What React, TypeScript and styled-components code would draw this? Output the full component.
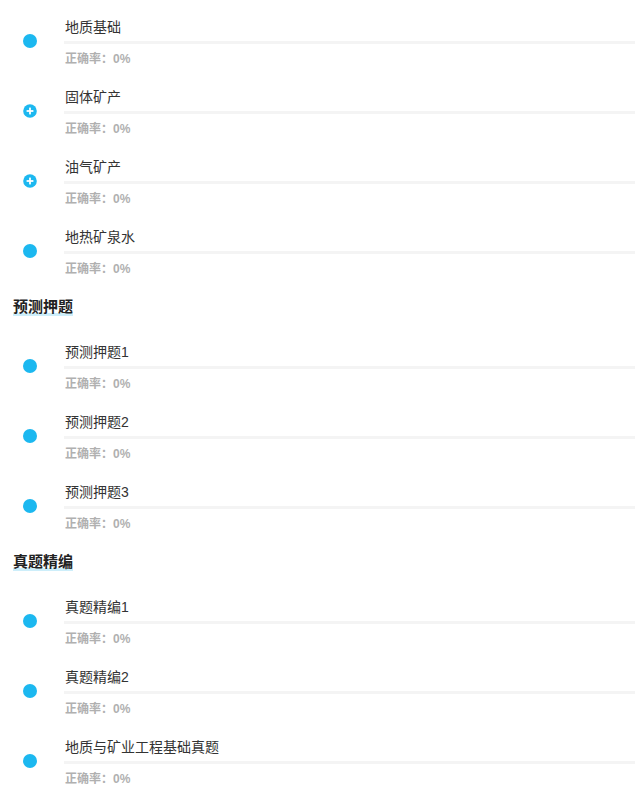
import { FC } from "react";
import styled, { createGlobalStyle } from "styled-components";

type Item = { title: string; expandable?: boolean };
type Section = { heading?: string; items: Item[] };

const sections: Section[] = [
    {
        items: [
            { title: "地质基础" },
            { title: "固体矿产", expandable: true },
            { title: "油气矿产", expandable: true },
            { title: "地热矿泉水" },
        ],
    },
    {
        heading: "预测押题",
        items: [{ title: "预测押题1" }, { title: "预测押题2" }, { title: "预测押题3" }],
    },
    {
        heading: "真题精编",
        items: [{ title: "真题精编1" }, { title: "真题精编2" }, { title: "地质与矿业工程基础真题" }],
    },
];

const BLUE = "#1cb8f0";

const GlobalStyle = createGlobalStyle`
    html, body {
        margin: 0;
        padding: 0;
        background: #fff;
    }
    body {
        font-family: "Liberation Sans", "Noto Sans CJK SC", sans-serif;
    }
`;

const PlusIcon: FC = () => (
    <svg width="14" height="14" viewBox="0 0 14 14">
        <circle cx="7" cy="7" r="6.8" fill={BLUE} />
        <rect x="3.6" y="6.1" width="6.8" height="1.8" fill="#fff" />
        <rect x="6.1" y="3.6" width="1.8" height="6.8" fill="#fff" />
    </svg>
);

const App: FC = () => (
    <Page>
        <GlobalStyle />
        {sections.map((section, si) => (
            <div key={si}>
                {section.heading && (
                    <Heading>
                        <HeadingText>{section.heading}</HeadingText>
                    </Heading>
                )}
                {section.items.map((item) => (
                    <Row key={item.title}>
                        <Marker>{item.expandable ? <PlusIcon /> : <Dot />}</Marker>
                        <Content>
                            <Title>{item.title}</Title>
                            <Bar />
                            <Rate>正确率：0%</Rate>
                        </Content>
                    </Row>
                ))}
            </div>
        ))}
    </Page>
);

const Page = styled.div`
    width: 635px;
    display: flex;
    flex-direction: column;
`;

const Heading = styled.div`
    height: 45px;
    box-sizing: border-box;
    padding: 17px 0 0 13px;
`;

const HeadingText = styled.span`
    display: inline-block;
    font-size: 15px;
    line-height: 20px;
    font-weight: bold;
    color: #222;
    background: linear-gradient(to bottom, transparent 16px, #cdeefa 16px, #cdeefa 19px, transparent 19px);
`;

const Row = styled.div`
    height: 70px;
    display: flex;
    align-items: flex-start;
`;

const Marker = styled.div`
    width: 64px;
    height: 14px;
    margin-top: 34px;
    display: flex;
    align-items: center;
    padding-left: 23px;
    box-sizing: border-box;
`;

const Dot = styled.div`
    width: 14px;
    height: 14px;
    border-radius: 50%;
    background: ${BLUE};
`;

const Content = styled.div`
    flex: 1;
    padding-top: 17px;
`;

const Title = styled.div`
    padding-left: 1px;
    font-size: 14px;
    line-height: 20px;
    color: #333;
`;

const Bar = styled.div`
    margin-top: 4px;
    height: 3px;
    background: #f4f4f4;
`;

const Rate = styled.div`
    margin-top: 7px;
    padding-left: 1px;
    font-size: 12px;
    line-height: 16px;
    font-weight: bold;
    color: #b0b0b0;
`;

export default App;
